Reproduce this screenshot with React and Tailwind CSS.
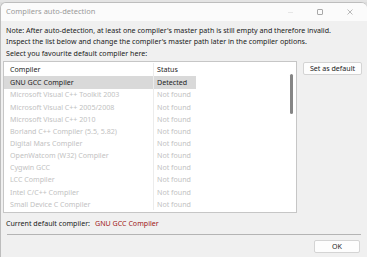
import React from 'react';

const ROWS = [
  ['GNU GCC Compiler', 'Detected'],
  ['Microsoft Visual C++ Toolkit 2003', 'Not found'],
  ['Microsoft Visual C++ 2005/2008', 'Not found'],
  ['Microsoft Visual C++ 2010', 'Not found'],
  ['Borland C++ Compiler (5.5, 5.82)', 'Not found'],
  ['Digital Mars Compiler', 'Not found'],
  ['OpenWatcom (W32) Compiler', 'Not found'],
  ['Cygwin GCC', 'Not found'],
  ['LCC Compiler', 'Not found'],
  ['Intel C/C++ Compiler', 'Not found'],
  ['Small Device C Compiler', 'Not found'],
];

const App = () => {
  return (
    <div
      className="w-[367px] h-[257px] overflow-hidden bg-[#dcdcdc] flex flex-col text-[7.1px] text-[#1a1a1a]"
      style={{ fontFamily: '"Noto Sans", "Open Sans", sans-serif' }}
    >
      {/* strip of the window behind */}
      <div className="h-[2px] shrink-0 bg-[#e4e4e4]" />

      <div className="flex-1 flex flex-col rounded-t-[6px] border-t border-l border-[#bdbdbd] bg-[#f0f0f0] overflow-hidden">
        {/* Title bar */}
        <div className="h-[18px] shrink-0 bg-[#fbfbfb] flex items-center pl-[5px] pr-[14px]">
          <span className="text-[#9a9a9a] text-[7.5px]">Compilers auto-detection</span>
          <div className="ml-auto flex items-center gap-[24px]">
            <div className="w-[5px] h-px bg-[#e6e6e6]" />
            <div className="w-[6px] h-[6px] border border-[#a8a8a8] rounded-[1px]" />
            <svg width="6" height="6" viewBox="0 0 6 6" className="text-[#a8a8a8]">
              <path d="M0.5 0.5L5.5 5.5M5.5 0.5L0.5 5.5" stroke="currentColor" strokeWidth="0.8" />
            </svg>
          </div>
        </div>

        {/* Body */}
        <div className="flex-1 flex flex-col pl-[2px] pr-[4px]">
          <div className="pl-[3px] pt-[4px] leading-[11.3px]">
            <p>Note: After auto-detection, at least one compiler's master path is still empty and therefore invalid.</p>
            <p>Inspect the list below and change the compiler's master path later in the compiler options.</p>
            <p>Select you favourite default compiler here:</p>
          </div>

          <div className="flex mt-[2px] gap-[6px]">
            {/* List */}
            <div className="relative w-[294px] h-[152px] shrink-0 bg-white border border-[#c6c6c6] overflow-hidden pt-[1px]">
              <div className="flex h-[13.6px] items-center text-[#1e1e1e]">
                <div className="w-[150px] pl-[6px] border-r border-[#ececec] h-full flex items-center">Compiler</div>
                <div className="w-[42px] pl-[3px]">Status</div>
              </div>
              {ROWS.map(([name, status], i) => (
                <div
                  key={name}
                  className={`flex w-[192px] h-[12.15px] items-center ${i === 0 ? 'bg-[#d9d9d9] text-[#1e1e1e]' : 'text-[#c2c2c2]'}`}
                >
                  <div className="w-[150px] pl-[6px] border-r border-[#ececec] h-full flex items-center whitespace-nowrap">{name}</div>
                  <div className="w-[42px] pl-[3px] whitespace-nowrap">{status}</div>
                </div>
              ))}
              {/* scrollbar thumb */}
              <div className="absolute left-[286px] top-[12px] w-[3px] h-[40px] rounded-full bg-[#858585]" />
            </div>

            <div className="pt-[1px]">
              <button className="w-[59px] h-[13px] bg-[#fdfdfd] border border-[#d4d4d4] rounded-[2px] leading-none">
                Set as default
              </button>
            </div>
          </div>

          <div className="pl-[3px] mt-[4px] h-[12px] flex items-center">
            <span>Current default compiler:</span>
            <span className="ml-[5px] text-[#a01818]">GNU GCC Compiler</span>
          </div>

          <div className="ml-[4px] mr-[2px] mt-[5px] h-px shrink-0 bg-[#b4b4b4]" />

          <div className="flex justify-end pr-[3px] mt-[5px]">
            <button className="w-[46px] h-[13px] bg-[#fdfdfd] border border-[#d4d4d4] rounded-[2px] leading-none">
              OK
            </button>
          </div>
        </div>
      </div>
    </div>
  );
};

export default App;
